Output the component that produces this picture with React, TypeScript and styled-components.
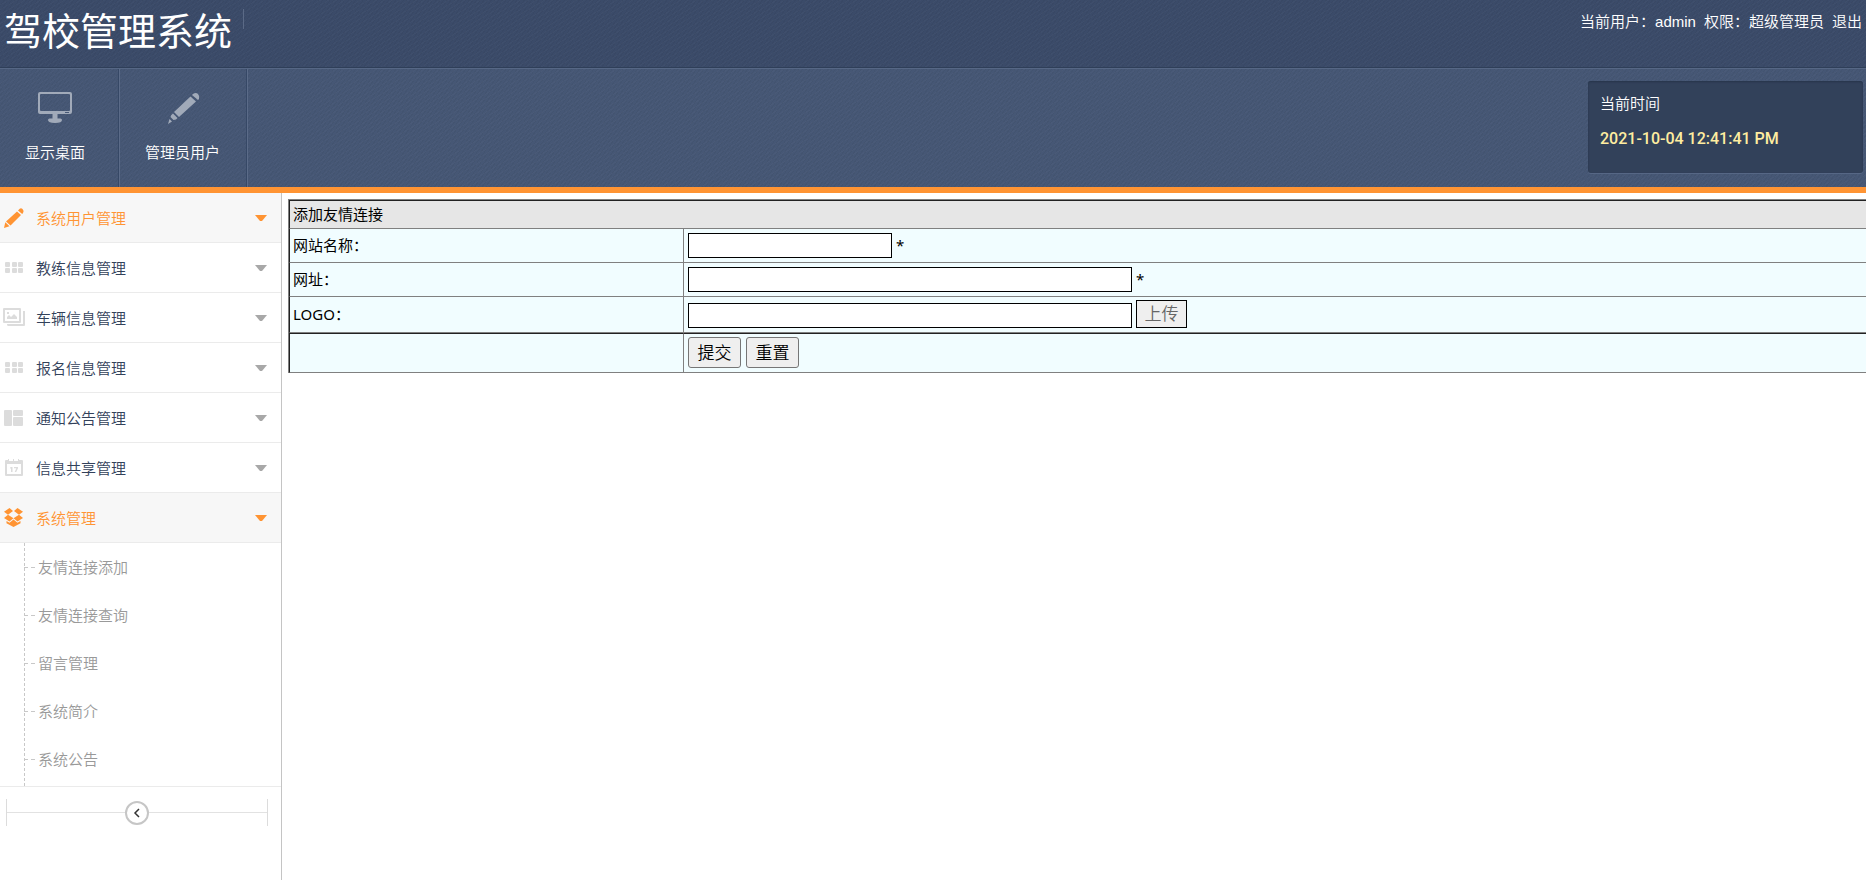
import React, { useState } from "react";
import styled, { createGlobalStyle, css } from "styled-components";

const font = '"Noto Sans", "Noto Sans CJK SC", sans-serif';

const GlobalStyle = createGlobalStyle`
  * { box-sizing: border-box; }
  html, body, #root { height: 100%; }
  body { margin: 0; background: #fff; font: 15px/20px ${font}; font-weight: 350; color: #000; }
  a { color: inherit; text-decoration: none; }
  button, input { font-family: inherit; }
`;

const weave = css`
  background-image:
    repeating-linear-gradient(150deg, rgba(255, 255, 255, 0.02) 0 1px, transparent 1px 4px),
    repeating-linear-gradient(125deg, rgba(0, 0, 0, 0.04) 0 1px, transparent 1px 3px);
`;

const Page = styled.div`
  display: flex;
  flex-direction: column;
  min-height: 100%;
`;

const TopBar = styled.header`
  display: flex;
  justify-content: space-between;
  height: 68px;
  padding: 0 4px;
  border-bottom: 1px solid #2f3f59;
  background-color: #3b4b69;
  ${weave}
`;

const Brand = styled.h1`
  display: flex;
  margin: 0;
  font-size: 38px;
  line-height: 60px;
  font-weight: 400;
  color: #fff;

  &::after {
    content: "";
    width: 1px;
    height: 20px;
    margin: 9px 0 0 11px;
    background: #5b6a86;
  }
`;

const UserInfo = styled.div`
  display: flex;
  gap: 8px;
  padding-top: 12px;
  font-family: "Liberation Sans", "Noto Sans CJK SC", sans-serif;
  color: #fff;
`;

const ToolBar = styled.div`
  display: flex;
  justify-content: space-between;
  height: 125px;
  border-top: 1px solid #566785;
  border-bottom: 6px solid #ff9433;
  background-color: #465775;
  ${weave}
`;

const Shortcuts = styled.nav`
  display: flex;
`;

const Shortcut = styled.a`
  display: flex;
  flex-direction: column;
  align-items: center;
  gap: 17px;
  padding: 22px 26px 0;
  border-right: 1px solid #364866;
  box-shadow: 1px 0 0 #5b6b88;
  color: #fff;

  &:first-child { padding: 22px 33px 0 25px; }

  svg { display: block; color: #a1aab9; }
`;

const Clock = styled.section`
  width: 275px;
  height: 92px;
  margin: 12px 3px 0 0;
  padding: 12px;
  border-radius: 3px;
  background: #32415a;
  box-shadow: inset 0 1px 2px #26344b, 0 1px 0 #566785;
  color: #fff;
`;

const Time = styled.time`
  display: block;
  margin-top: 16px;
  font: 500 16px/20px Roboto, sans-serif;
  color: #ffeda0;
`;

const Body = styled.div`
  display: flex;
  flex: 1;
`;

const Sidebar = styled.aside`
  flex: none;
  width: 282px;
  border-right: 1px solid #c4c4c4;
`;

const MenuLink = styled.a<{ $active?: boolean }>`
  display: flex;
  align-items: center;
  height: 50px;
  padding: 0 14px 0 3px;
  border-bottom: 1px solid #ebebeb;
  background: ${(p) => (p.$active ? "#f7f7f7" : "#fff")};
  color: ${(p) => (p.$active ? "#ff9433" : "#32415a")};

  > svg:first-child { margin-right: 11px; color: ${(p) => (p.$active ? "#ff9433" : "#dcdcdc")}; }
  > svg:last-child { margin-left: auto; color: ${(p) => (p.$active ? "#ff9433" : "#a8a8a8")}; }
`;

const SubMenu = styled.ul`
  margin: 0;
  padding: 0 0 3px 24px;
  list-style: none;
  border-bottom: 1px solid #ebebeb;
  position: relative;

  &::before {
    content: "";
    position: absolute;
    top: 0;
    bottom: 0;
    left: 24px;
    width: 1px;
    background: repeating-linear-gradient(#c8c8c8 0 3px, transparent 3px 5px);
  }
`;

const SubItem = styled.li`
  display: flex;
  align-items: center;
  height: 48px;
  color: #999;

  &::before {
    content: "";
    width: 12px;
    height: 1px;
    margin-right: 2px;
    background: repeating-linear-gradient(90deg, #c8c8c8 0 4px, transparent 4px 7px);
  }
`;

const Collapse = styled.div`
  display: flex;
  align-items: center;
  justify-content: center;
  height: 27px;
  margin: 12px 13px 0 6px;
  border: solid #dcdcdc;
  border-width: 0 1px;
  background: linear-gradient(#e2e2e2, #e2e2e2) center / 100% 1px no-repeat;
`;

const CollapseButton = styled.button`
  display: grid;
  place-items: center;
  width: 24px;
  height: 24px;
  padding: 0;
  border: 2px solid #c6c6c6;
  border-radius: 50%;
  background: #fff;
  color: #333;
`;

const Main = styled.main`
  flex: 1;
  min-width: 0;
  padding: 6px 0 0 6px;
`;

const FormTable = styled.table`
  width: 100%;
  border-spacing: 0;
  border: solid #808080;
  border-width: 1px 0 0 1px;
  font-weight: 400;
`;

const Row = styled.tr<{ $height: number; $rule?: boolean }>`
  height: ${(p) => p.$height}px;

  > :first-child { border-left: 1px solid #222; width: 394px; }
  > * { ${(p) => p.$rule && "border-top: 1px solid #222;"} }
`;

const Heading = styled.th`
  padding: 0 3px 1px;
  border-bottom: 1px solid #808080;
  background: #e6e6e6;
  font-weight: inherit;
  text-align: left;
`;

const Cell = styled.td`
  padding: 0 3px 1px;
  border-bottom: 1px solid #808080;
  background: #f1fdff;

  & + & { border-left: 1px solid #808080; padding-left: 4px; }
`;

const Field = styled.div<{ $bottom?: boolean }>`
  display: flex;
  align-items: ${(p) => (p.$bottom ? "flex-end" : "center")};
  gap: 4px;
`;

const TextInput = styled.input<{ $wide?: boolean }>`
  width: ${(p) => (p.$wide ? 444 : 204)}px;
  height: 25px;
  padding: 0 2px;
  border: 1px solid #000;
  background: #fff;
  font-size: 15px;
`;

const UploadButton = styled.button`
  width: 51px;
  height: 28px;
  padding: 0;
  border: 1px solid #000;
  background: #efefef;
  font-size: 17px;
  line-height: 26px;
  font-weight: 350;
  color: #666;
`;

const FormButton = styled.button`
  width: 53px;
  height: 31px;
  margin-right: 1px;
  padding: 0;
  border: 1px solid #767676;
  border-radius: 3px;
  background: #efefef;
  font-size: 17px;
  line-height: 26px;
  font-weight: 350;
  color: #000;
`;

const Monitor = () => (
  <svg width="34" height="34" viewBox="0 0 34 34" fill="currentColor">
    <path fillRule="evenodd" d="M2 1h30q2 0 2 2v18q0 2-2 2H19.500v4.500h3q1.500 0 1.500 1.500 0 3-7 3t-7-3q0-1.500 1.500-1.500h3V23H2q-2 0-2-2V3q0-2 2-2zm1 2q-1 0-1 1v15q0 1 1 1h28q1 0 1-1V4q0-1-1-1z" />
    <path d="M27 21h4v1h-4z" fill="#465775" />
  </svg>
);

const LargePencil = () => (
  <svg width="34" height="34" viewBox="0 0 34 34" fill="currentColor">
    <path d="M27 3q3-2 5 0t1 5l-1 1-6-5zM24.500 5.500l5.500 5L13 26l-5-5zM7 22.500l4.500 4.500q-1 2-4 2l-3-3q0-2 2.500-3.500zM3.500 28l2.500 2.500L2 33z" />
  </svg>
);

const Pencil = () => (
  <svg width="22" height="22" viewBox="0 0 22 22" fill="currentColor">
    <path d="M15.500 3q2-3 4-1 2 2 .5 4l-.8 1-4.200-3.500zM14 4.500L18 8 7.500 18.500l-4.500-4zM2.300 15.300l4.200 4L1 21z" />
  </svg>
);

const Grid = () => (
  <svg width="22" height="22" viewBox="0 0 22 22" fill="currentColor">
    {[5, 11].map((y) => [2, 9, 15].map((x) => <rect key={x + "-" + y} x={x} y={y} width="5" height="5" rx="1" />))}
  </svg>
);

const Pictures = () => (
  <svg width="22" height="22" viewBox="0 0 22 22" fill="currentColor">
    <path fillRule="evenodd" d="M1 1h16q1 0 1 1v13q0 1-1 1H1q-1 0-1-1V2q0-1 1-1zm1 2v11h14V3z" />
    <path d="M4 12v-2l2-2 2 2 3-3 3 3v2zM4 5h2v2H4zM20 4h2v14q0 1-1 1H5q-1 0-1-2h16z" />
  </svg>
);

const Panels = () => (
  <svg width="22" height="22" viewBox="0 0 22 22" fill="currentColor">
    <rect x="1" y="3" width="8" height="16" rx="1" />
    <rect x="10" y="3" width="10" height="6" rx="1" />
    <rect x="10" y="10" width="10" height="9" rx="1" />
  </svg>
);

const Calendar = () => (
  <svg width="22" height="22" viewBox="0 0 22 22" fill="currentColor">
    <path fillRule="evenodd" d="M3 3h2V2h1v2h4V2h1v2h4V2h1v1h3q1 0 1 1v14q0 1-1 1H3q-1 0-1-1V4q0-1 1-1zm1 4v10h14V7z" />
    <path d="M7.500 10h2v5h-1.500v-3.500h-1zM11 10h4v1.200L13.200 15h-1.500l1.600-3.700H11z" />
  </svg>
);

const Dropbox = () => (
  <svg width="22" height="22" viewBox="0 0 22 22" fill="currentColor">
    <path d="M6.500 1L10 4 5 7.800 1 4.700zM14.500 1L20 4.700 16 7.800 11 4zM1 11L5 7.800l5.500 3.500L6.500 14.500zM20 11l-4-3.200-5.500 3.500 4 3.200zM10.500 12.500l4 3.300 3-1.800v2.300L10.500 20l-7-3.700V14l3 1.800z" />
  </svg>
);

const Caret = () => (
  <svg width="12" height="6" viewBox="0 0 12 6" fill="currentColor">
    <path d="M0 0h12L7 6H5z" />
  </svg>
);

const menu = [
  { label: "系统用户管理", icon: <Pencil />, active: true },
  { label: "教练信息管理", icon: <Grid /> },
  { label: "车辆信息管理", icon: <Pictures /> },
  { label: "报名信息管理", icon: <Grid /> },
  { label: "通知公告管理", icon: <Panels /> },
  { label: "信息共享管理", icon: <Calendar /> },
  { label: "系统管理", icon: <Dropbox />, active: true },
];

const links = ["友情连接添加", "友情连接查询", "留言管理", "系统简介", "系统公告"];

export default function App() {
  const [collapsed, setCollapsed] = useState(false);
  return (
    <Page>
      <GlobalStyle />
      <TopBar>
        <Brand>驾校管理系统</Brand>
        <UserInfo>
          <span>当前用户：admin</span>
          <span>权限：超级管理员</span>
          <a href="#logout">退出</a>
        </UserInfo>
      </TopBar>
      <ToolBar>
        <Shortcuts>
          <Shortcut href="#desktop"><Monitor />显示桌面</Shortcut>
          <Shortcut href="#admins"><LargePencil />管理员用户</Shortcut>
        </Shortcuts>
        <Clock>
          当前时间
          <Time dateTime="2021-10-04T12:41:41">2021-10-04 12:41:41 PM</Time>
        </Clock>
      </ToolBar>
      <Body>
        <Sidebar>
          <nav>
            {menu.map((item) => (
              <MenuLink key={item.label} href="#menu" $active={item.active}>
                {item.icon}
                {item.label}
                <Caret />
              </MenuLink>
            ))}
            {!collapsed && (
              <SubMenu>
                {links.map((label) => (
                  <SubItem key={label}><a href="#page">{label}</a></SubItem>
                ))}
              </SubMenu>
            )}
          </nav>
          <Collapse>
            <CollapseButton type="button" aria-label="收起菜单" onClick={() => setCollapsed(!collapsed)}>
              <svg width="8" height="10" viewBox="0 0 8 10" fill="none" stroke="currentColor" strokeWidth="1.500">
                <path d="M6 1L2 5l4 4" />
              </svg>
            </CollapseButton>
          </Collapse>
        </Sidebar>
        <Main>
          <form onSubmit={(e) => e.preventDefault()}>
            <FormTable>
              <tbody>
                <Row $height={29} $rule><Heading colSpan={2}>添加友情连接</Heading></Row>
                <Row $height={34}>
                  <Cell><label htmlFor="site">网站名称：</label></Cell>
                  <Cell><Field><TextInput id="site" />*</Field></Cell>
                </Row>
                <Row $height={34}>
                  <Cell><label htmlFor="url">网址：</label></Cell>
                  <Cell><Field><TextInput id="url" $wide />*</Field></Cell>
                </Row>
                <Row $height={36}>
                  <Cell><label htmlFor="logo">LOGO：</label></Cell>
                  <Cell><Field $bottom><TextInput id="logo" $wide /><UploadButton type="button">上传</UploadButton></Field></Cell>
                </Row>
                <Row $height={40} $rule>
                  <Cell />
                  <Cell><Field><FormButton type="submit">提交</FormButton><FormButton type="reset">重置</FormButton></Field></Cell>
                </Row>
              </tbody>
            </FormTable>
          </form>
        </Main>
      </Body>
    </Page>
  );
}
